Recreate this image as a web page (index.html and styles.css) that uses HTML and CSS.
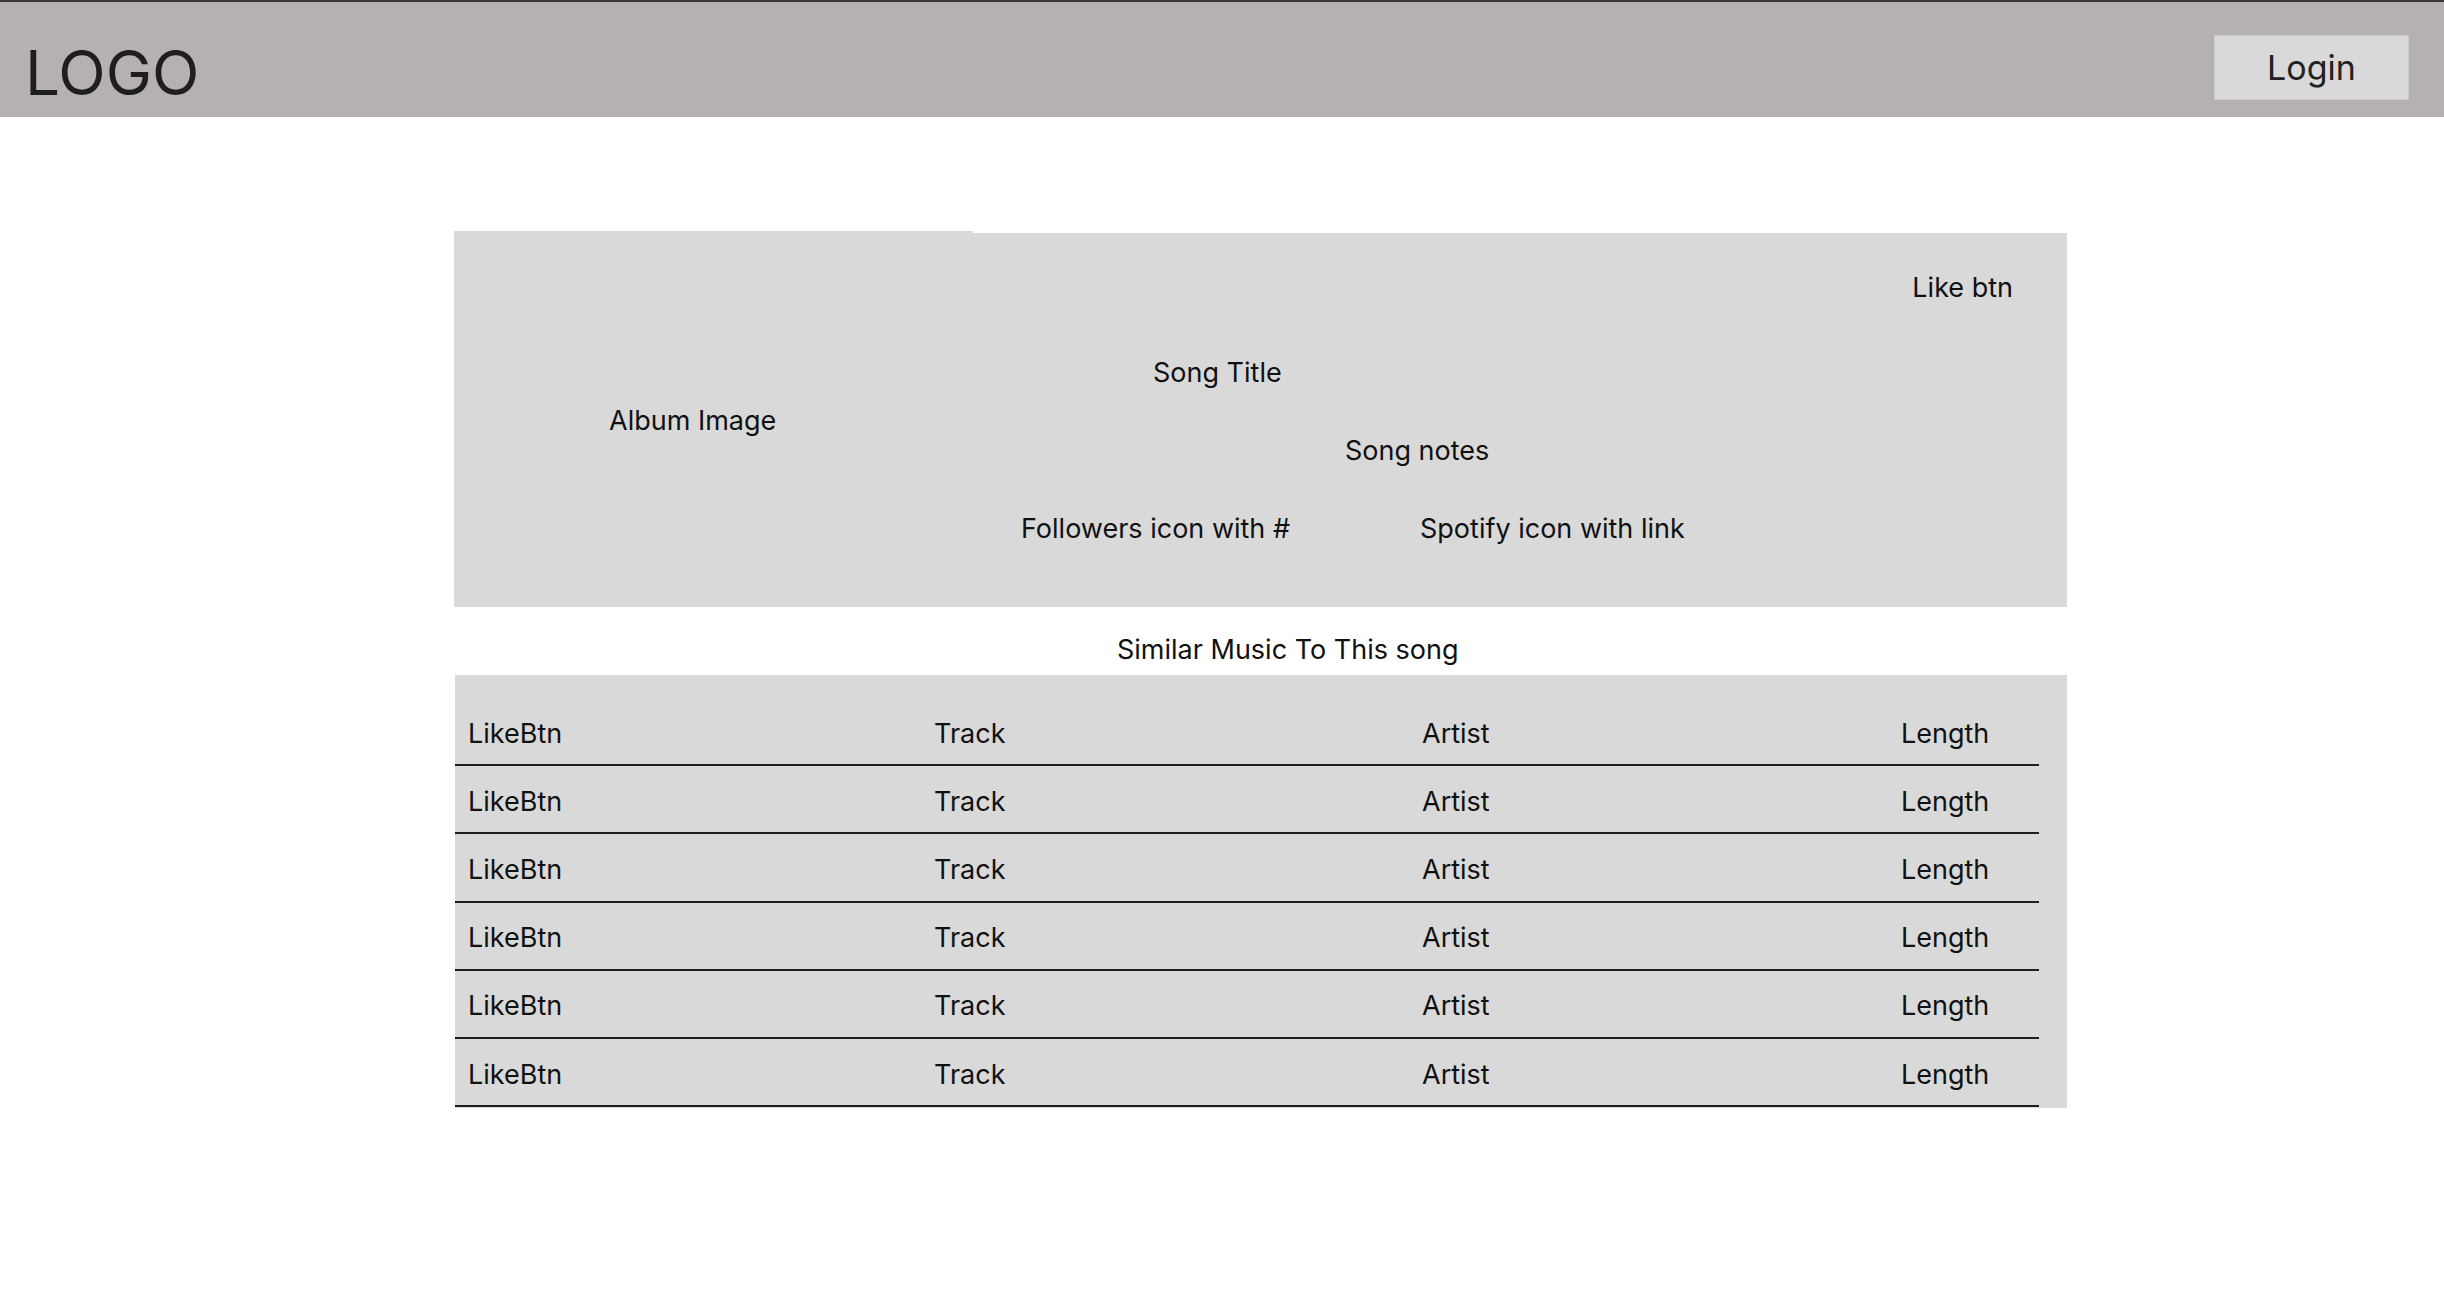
FILE: index.html
```html
<!DOCTYPE html>
<html lang="en">
<head>
<meta charset="utf-8">
<title>Song</title>
<link rel="stylesheet" href="styles.css">
</head>
<body>
<header class="topbar">
  <div class="logo">LOGO</div>
  <button class="login">Login</button>
</header>
<main class="content">
  <section class="song-card">
    <div class="album">Album Image</div>
    <div class="info">
      <div class="info-row like-row"><span>Like btn</span></div>
      <div class="info-row title-row"><span>Song Title</span></div>
      <div class="info-row notes-row"><span>Song notes</span></div>
      <div class="info-row links-row">
        <span class="followers">Followers icon with #</span>
        <span class="spotify">Spotify icon with link</span>
      </div>
    </div>
  </section>
  <h2 class="similar-heading">Similar Music To This song</h2>
  <section class="tracks">
    <div class="track-row"><span>LikeBtn</span><span>Track</span><span>Artist</span><span>Length</span></div>
    <div class="track-row"><span>LikeBtn</span><span>Track</span><span>Artist</span><span>Length</span></div>
    <div class="track-row"><span>LikeBtn</span><span>Track</span><span>Artist</span><span>Length</span></div>
    <div class="track-row"><span>LikeBtn</span><span>Track</span><span>Artist</span><span>Length</span></div>
    <div class="track-row"><span>LikeBtn</span><span>Track</span><span>Artist</span><span>Length</span></div>
    <div class="track-row"><span>LikeBtn</span><span>Track</span><span>Artist</span><span>Length</span></div>
  </section>
</main>
</body>
</html>
```
FILE: styles.css
```css
* { box-sizing: border-box; }
html, body { margin: 0; padding: 0; background: #ffffff; }
body {
  font-family: Inter, "Noto Sans", "Liberation Sans", sans-serif;
  color: #111111;
  font-size: 27px;
  line-height: 34px;
}
.topbar {
  display: flex;
  justify-content: space-between;
  align-items: flex-start;
  height: 117px;
  background: #b6b0b0;
  border-top: 2px solid #3a3a3a;
  padding: 0 35px 0 25px;
}
.logo {
  margin-top: 33px;
  font-size: 62px;
  line-height: 75px;
  color: #1e1e1e;
}
.login {
  margin-top: 33px;
  width: 195px;
  height: 65px;
  background: #d9d9d9;
  border: 1px solid #cdcaca;
  font-family: inherit;
  font-size: 34px;
  color: #222222;
  padding: 0;
  line-height: 1;
}
.content {
  padding-left: 454px;
  width: 2067px;
}
.song-card {
  margin-top: 116px;
  display: flex;
  height: 374px;
  background: #d9d9d9;
}
.album {
  width: 519px;
  height: 376px;
  margin-top: -2px;
  background: #d9d9d9;
  display: flex;
  align-items: center;
  padding-left: 155px;
  padding-top: 4px;
}
.info {
  flex: 1;
  display: flex;
  flex-direction: column;
  padding-top: 38px;
}
.info-row { display: flex; }
.like-row { justify-content: flex-end; padding-right: 54px; }
.title-row { margin-top: 51px; padding-left: 180px; }
.notes-row { margin-top: 44px; padding-left: 372px; }
.links-row { margin-top: 44px; padding-left: 48px; }
.followers { width: 399px; }
.similar-heading {
  margin: 26px 0 8px 0;
  padding-left: 663px;
  font-size: 27px;
  line-height: 34px;
  font-weight: 400;
}
.tracks {
  margin-left: 1px;
  background: #d9d9d9;
  padding: 23px 28px 1px 0;
}
.track-row {
  display: grid;
  grid-template-columns: 466px 488px 479px auto;
  align-items: center;
  height: 68.2px;
  padding: 5px 0 0 13px;
  border-bottom: 2px solid #1e1e1e;
}
```
